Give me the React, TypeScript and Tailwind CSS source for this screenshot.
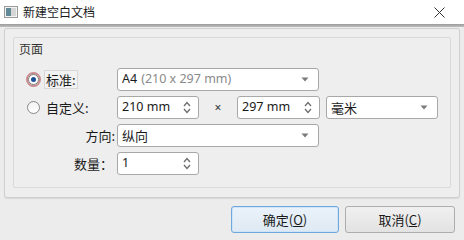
import React from 'react'

const cjk = { fontFamily: '"Noto Sans CJK SC", "Noto Sans", sans-serif' }

function Arrow() {
  return (
    <svg width="8" height="5" viewBox="0 0 8 5">
      <path d="M0.5 0.5 L7.5 0.5 L4 4.5 Z" fill="#7a7a7a" />
    </svg>
  )
}

function SpinArrows() {
  return (
    <svg width="8" height="13" viewBox="0 0 8 13">
      <path d="M1 5 L4 1.5 L7 5" fill="none" stroke="#6e6e6e" strokeWidth="1.3" />
      <path d="M1 8 L4 11.5 L7 8" fill="none" stroke="#6e6e6e" strokeWidth="1.3" />
    </svg>
  )
}

function Combo({ w, children }: { w: string; children: React.ReactNode }) {
  return (
    <div
      className={`${w} h-[23px] flex items-center justify-between bg-white border border-[#a8a8a8] rounded-[3px] pl-[4px] pr-[9px] text-[13px] text-[#1a1a1a]`}
    >
      <div className="flex items-center">{children}</div>
      <Arrow />
    </div>
  )
}

function Spin({ w, value }: { w: string; value: string }) {
  return (
    <div
      className={`${w} h-[23px] flex items-center justify-between bg-white border border-[#a8a8a8] rounded-[3px] pl-[4px] pr-[7px] text-[12.5px] text-[#1a1a1a]`}
    >
      <span>{value}</span>
      <SpinArrows />
    </div>
  )
}

function Radio({ checked }: { checked?: boolean }) {
  if (checked) {
    return (
      <div className="w-[15px] h-[15px] rounded-full border-[2px] border-[#c98a8f] bg-white flex items-center justify-center">
        <div className="w-[11px] h-[11px] rounded-full border border-[#7a7a7a] flex items-center justify-center">
          <div className="w-[5px] h-[5px] rounded-full bg-[#1f4f9a]" />
        </div>
      </div>
    )
  }
  return (
    <div className="w-[15px] h-[15px] flex items-center justify-center">
      <div className="w-[13px] h-[13px] rounded-full border border-[#888888] bg-gradient-to-b from-[#f2f2f2] to-white" />
    </div>
  )
}

export default function App() {
  return (
    <div
      className="w-[464px] h-[240px] overflow-hidden flex flex-col bg-[#ececec]"
      style={{ fontFamily: '"Noto Sans", "Noto Sans CJK SC", sans-serif' }}
    >
      {/* title bar */}
      <div className="h-[24px] flex items-center bg-white">
        <svg className="ml-[4px]" width="14" height="12" viewBox="0 0 14 12">
          <rect x="0.5" y="0.5" width="13" height="11" fill="#f4f4f4" stroke="#9a9a9a" />
          <rect x="2" y="2" width="5" height="8" fill="#5f8a96" />
          <rect x="7" y="2" width="5" height="8" fill="#d6d6d6" />
        </svg>
        <span className="ml-[5px] text-[12px] text-[#1a1a1a]" style={cjk}>
          新建空白文档
        </span>
        <svg className="ml-auto mr-[19px]" width="11" height="11" viewBox="0 0 11 11">
          <path d="M0.5 0.5 L10.5 10.5 M10.5 0.5 L0.5 10.5" stroke="#333" strokeWidth="1" />
        </svg>
      </div>
      <div className="h-[3px] bg-gradient-to-b from-[#9c9c9c] to-[#bdbdbd]" />

      {/* body */}
      <div className="flex-1 flex flex-col px-[4px] pt-[1px]">
        <div className="h-[170px] border border-[#cfcfcf] rounded-[3px] bg-[#eeeeee] px-[8px] pt-[8px] pb-[9px] shadow-[0_1px_1px_rgba(0,0,0,0.08)]">
          <div className="h-full border border-[#dadada] rounded-[2px] flex flex-col">
            <div className="h-[22px] flex items-center pl-[5px] text-[12px] text-[#333]" style={cjk}>
              页面
            </div>
            <div className="flex flex-col gap-[5px] pl-[12px] pt-[8px]">
              {/* row 1 */}
              <div className="flex items-center">
                <div className="w-[91px] flex items-center">
                  <Radio checked />
                  <span
                    className="ml-[3px] px-[1px] border border-[#d8d8d8] bg-[#f2f2f2] text-[13px] text-[#1a1a1a] leading-[17px]"
                    style={cjk}
                  >
                    标准:
                  </span>
                </div>
                <Combo w="w-[202px]">
                  <span className="text-[12.5px]">A4</span>
                  <span className="ml-[4px] text-[12.5px] text-[#8a8a8a]">(210 x 297 mm)</span>
                </Combo>
              </div>
              {/* row 2 */}
              <div className="flex items-center">
                <div className="w-[91px] flex items-center">
                  <Radio />
                  <span className="ml-[5px] text-[13px] text-[#1a1a1a]" style={cjk}>
                    自定义:
                  </span>
                </div>
                <Spin w="w-[82px]" value="210 mm" />
                <div className="w-[38px] text-center text-[12px] text-[#333]">×</div>
                <Spin w="w-[83px]" value="297 mm" />
                <div className="ml-[6px]">
                  <Combo w="w-[112px]">
                    <span style={cjk}>毫米</span>
                  </Combo>
                </div>
              </div>
              {/* row 3 */}
              <div className="flex items-center">
                <div className="w-[91px] text-right pr-[2px] text-[13px] text-[#1a1a1a]" style={cjk}>
                  方向:
                </div>
                <Combo w="w-[202px]">
                  <span style={cjk}>纵向</span>
                </Combo>
              </div>
              {/* row 4 */}
              <div className="flex items-center">
                <div className="w-[91px] text-right pr-[4px] text-[13px] text-[#1a1a1a]" style={cjk}>
                  数量：
                </div>
                <Spin w="w-[82px]" value="1" />
              </div>
            </div>
          </div>
        </div>

        {/* buttons */}
        <div className="flex justify-end gap-[6px] mt-[8px] pr-[5px]">
          <button
            className="w-[108px] h-[27px] rounded-[3px] border border-[#6fa8dc] bg-gradient-to-b from-[#eaf3fb] to-[#dfe9f3] shadow-[inset_0_0_0_1px_#cfe4f7] text-[13px] text-[#1a1a1a]"
            style={cjk}
          >
            确定(<span className="underline">O</span>)
          </button>
          <button
            className="w-[110px] h-[27px] rounded-[3px] border border-[#adadad] bg-gradient-to-b from-[#f0f0f0] to-[#e3e3e3] text-[13px] text-[#1a1a1a]"
            style={cjk}
          >
            取消(<span className="underline">C</span>)
          </button>
        </div>
      </div>
    </div>
  )
}
